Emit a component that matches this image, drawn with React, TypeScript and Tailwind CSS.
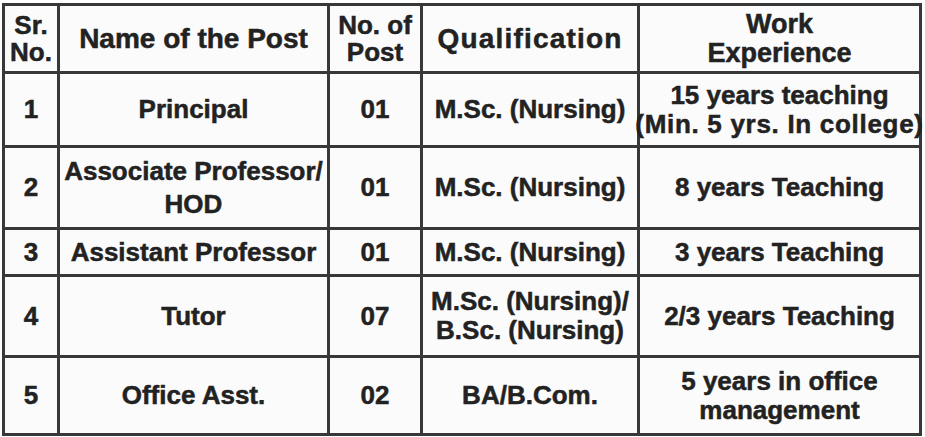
import React from "react";

const cell = "bg-[#fbfbfb] flex items-center justify-center text-center text-[#222222] whitespace-nowrap";

export default function App() {
  const rows: [string, React.ReactNode, string, React.ReactNode, React.ReactNode][] = [
    ["1", "Principal", "01", "M.Sc. (Nursing)", <>15 years teaching<br /><span className="-mx-[20px] inline-block tracking-[0.7px]">(Min. 5 yrs. In college)</span></>],
    ["2", <span className="block leading-[33px]">Associate Professor/<br />HOD</span>, "01", "M.Sc. (Nursing)", "8 years Teaching"],
    ["3", "Assistant Professor", "01", "M.Sc. (Nursing)", "3 years Teaching"],
    ["4", "Tutor", "07", <>M.Sc. (Nursing)/<br />B.Sc. (Nursing)</>, "2/3 years Teaching"],
    ["5", "Office Asst.", "02", "BA/B.Com.", <>5 years in office<br />management</>],
  ];
  return (
    <div className="w-[925px] h-[437px] bg-white pt-[3px] pl-[2px]" style={{ fontFamily: '"Liberation Sans", Arial, sans-serif' }}>
      <div className="w-[920px] h-[433px] border-[3px] border-[#383838] bg-[#383838] grid grid-cols-[52px_267px_90px_214px_279px] grid-rows-[65px_71px_79px_44px_78px_75px] gap-[3px] font-bold text-[26px] leading-[29px] [-webkit-text-stroke:0.5px_#222222]">
        <div className={cell + " text-[26px] leading-[27px]"}><span>Sr.<br />No.</span></div>
        <div className={cell + " text-[28px]"}><span>Name of the Post</span></div>
        <div className={cell + " text-[26px] leading-[27px]"}><span>No. of<br />Post</span></div>
        <div className={cell + " text-[28px] tracking-[1.2px]"}><span>Qualification</span></div>
        <div className={cell + " text-[27px] leading-[29px]"}><span>Work<br />Experience</span></div>
        {rows.map((r, i) => (
          <React.Fragment key={i}>
            <div className={cell}><span>{r[0]}</span></div>
            <div className={cell}><span>{r[1]}</span></div>
            <div className={cell}><span>{r[2]}</span></div>
            <div className={cell}><span>{r[3]}</span></div>
            <div className={cell}><span>{r[4]}</span></div>
          </React.Fragment>
        ))}
      </div>
    </div>
  );
}
